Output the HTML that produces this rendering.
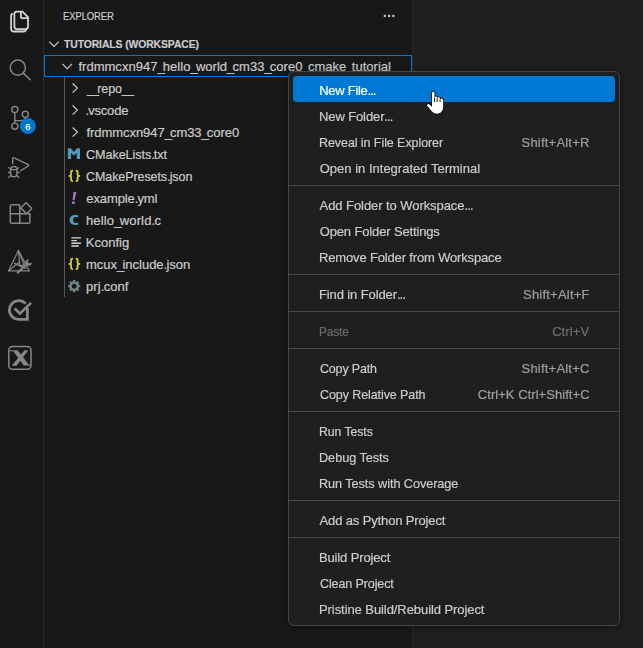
<!DOCTYPE html>
<html>
<head>
<meta charset="utf-8">
<title>Explorer</title>
<style>
*{box-sizing:border-box;margin:0;padding:0}
html,body{width:643px;height:648px;overflow:hidden;background:#1f1f1f}
body{position:relative;font-family:"Liberation Sans",sans-serif;font-size:13px;color:#cccccc}
#act{position:absolute;left:0;top:0;width:44px;height:648px;background:#181818;border-right:1px solid #2b2b2b}
#side{position:absolute;left:44px;top:0;width:369px;height:648px;background:#181818;border-right:1px solid #2b2b2b}
.t{-webkit-text-stroke:.2px;transform-origin:0 50%;position:absolute;white-space:nowrap;line-height:22px;height:22px;color:#cccccc;padding-top:1px}
.title{font-size:11px;padding-top:0}
.hdr{font-size:11px;font-weight:bold;padding-top:0}
#focus{position:absolute;left:44px;top:55px;width:368px;height:22px;border:1px solid #0078d4}
#guide{position:absolute;left:64px;top:77px;width:1px;height:220px;background:#585858}
#menu{position:absolute;left:288px;top:71px;width:332px;height:555px;background:#1f1f1f;border:1px solid #454545;border-radius:6px;box-shadow:0 2px 8px rgba(0,0,0,0.36)}
#sel{position:absolute;left:293px;top:76px;width:322px;height:26px;background:#0078d4;border-radius:4px}
.mi{will-change:opacity;-webkit-text-stroke:.2px;transform-origin:0 50%;position:absolute;white-space:nowrap;line-height:26px;height:26px;color:#cccccc;padding-top:2px}
.kb{color:#cccccc;opacity:.73}
.sel{color:#ffffff}
.dis{color:#6a6a6a}
.kb.dis{color:#8c8c8c}
.sep{position:absolute;left:289px;width:330px;height:1px;background:#454545}
#ov{position:absolute;left:0;top:0;width:643px;height:648px;overflow:visible}
</style>
</head>
<body>
<div id="act"></div>
<div id="side"></div>
<div id="focus"></div>
<div id="guide"></div>
<div class="t" style="left:78.41px;top:55px;letter-spacing:0.024px">frdmmcxn947<span style="letter-spacing:-1.806px">_</span>hello<span style="letter-spacing:-1.806px">_</span>world<span style="letter-spacing:-1.806px">_</span>cm33<span style="letter-spacing:-1.806px">_</span>core0<span style="letter-spacing:-1.806px">_</span>cmake<span style="letter-spacing:-1.806px">_</span>tutorial</div>
<div class="t" style="left:86.50px;top:77px;letter-spacing:-0.066px;transform:scaleX(0.96)"><span style="letter-spacing:-1.896px">__</span>repo<span style="letter-spacing:-1.896px">__</span></div>
<div class="t" style="left:85.59px;top:99px;letter-spacing:-0.195px"><span style="letter-spacing:-0.995px">.</span>vscode</div>
<div class="t" style="left:86.54px;top:121px;letter-spacing:-0.061px">frdmmcxn947<span style="letter-spacing:-1.891px">_</span>cm33<span style="letter-spacing:-1.891px">_</span>core0</div>
<div class="t" style="left:86.41px;top:143px;letter-spacing:-0.075px;transform:scaleX(0.97)">CMakeLists<span style="letter-spacing:-0.875px">.</span>txt</div>
<div class="t" style="left:86.41px;top:165px;letter-spacing:-0.071px;transform:scaleX(0.96)">CMakePresets<span style="letter-spacing:-0.871px">.</span>json</div>
<div class="t" style="left:86.29px;top:187px;letter-spacing:-0.100px">example<span style="letter-spacing:-0.900px">.</span>yml</div>
<div class="t" style="left:86.00px;top:209px;letter-spacing:0.144px">hello<span style="letter-spacing:-1.686px">_</span>world<span style="letter-spacing:-0.656px">.</span>c</div>
<div class="t" style="left:85.78px;top:231px;letter-spacing:0.017px">Kconfig</div>
<div class="t" style="left:86.03px;top:253px;letter-spacing:-0.009px">mcux<span style="letter-spacing:-1.839px">_</span>include<span style="letter-spacing:-0.809px">.</span>json</div>
<div class="t" style="left:86.06px;top:275px;letter-spacing:0.078px">prj<span style="letter-spacing:-0.722px">.</span>conf</div>
<div class="t title" style="left:63.44px;top:5px;letter-spacing:-0.099px;transform:scaleX(0.86)">EXPLORER</div>
<div class="t hdr" style="left:64.39px;top:33px;letter-spacing:-0.072px;transform:scaleX(0.94)">TUTORIALS (WORKSPACE)</div>
<div id="menu"></div>
<div id="sel"></div>
<div class="sep" style="top:185px"></div>
<div class="sep" style="top:274px"></div>
<div class="sep" style="top:311px"></div>
<div class="sep" style="top:348px"></div>
<div class="sep" style="top:411px"></div>
<div class="sep" style="top:500px"></div>
<div class="sep" style="top:537px"></div>
<div class="mi sel" style="left:319.16px;top:76px;letter-spacing:-0.268px">New File<span style="letter-spacing:-1.068px">...</span></div>
<div class="mi" style="left:319.01px;top:102px;letter-spacing:-0.112px">New Folder<span style="letter-spacing:-0.912px">...</span></div>
<div class="mi" style="left:319.18px;top:128px;letter-spacing:-0.066px;transform:scaleX(0.96)">Reveal in File Explorer</div>
<div class="mi" style="left:319.73px;top:154px;letter-spacing:0.006px">Open in Integrated Terminal</div>
<div class="mi" style="left:319.58px;top:191px;letter-spacing:-0.070px">Add Folder to Workspace<span style="letter-spacing:-0.870px">...</span></div>
<div class="mi" style="left:319.73px;top:217px;letter-spacing:-0.142px">Open Folder Settings</div>
<div class="mi" style="left:319.01px;top:243px;letter-spacing:-0.156px">Remove Folder from Workspace</div>
<div class="mi" style="left:319.01px;top:280px;letter-spacing:-0.114px">Find in Folder<span style="letter-spacing:-0.914px">...</span></div>
<div class="mi dis" style="left:318.85px;top:317px;letter-spacing:-0.059px;transform:scaleX(0.9)">Paste</div>
<div class="mi" style="left:319.80px;top:354px;letter-spacing:-0.172px;transform:scaleX(0.96)">Copy Path</div>
<div class="mi" style="left:319.80px;top:380px;letter-spacing:-0.079px;transform:scaleX(0.96)">Copy Relative Path</div>
<div class="mi" style="left:318.51px;top:417px;letter-spacing:-0.049px;transform:scaleX(0.94)">Run Tests</div>
<div class="mi" style="left:319.07px;top:443px;letter-spacing:-0.036px;transform:scaleX(0.975)">Debug Tests</div>
<div class="mi" style="left:319.07px;top:469px;letter-spacing:-0.060px;transform:scaleX(0.975)">Run Tests with Coverage</div>
<div class="mi" style="left:319.58px;top:506px;letter-spacing:-0.139px">Add as Python Project</div>
<div class="mi" style="left:319.01px;top:543px;letter-spacing:-0.143px">Build Project</div>
<div class="mi" style="left:319.80px;top:569px;letter-spacing:-0.128px;transform:scaleX(0.965)">Clean Project</div>
<div class="mi" style="left:319.01px;top:595px;letter-spacing:-0.075px">Pristine Build/Rebuild Project</div>
<div class="mi kb" style="left:521.55px;top:128px;letter-spacing:0.205px">Shift+Alt+R</div>
<div class="mi kb" style="left:523.00px;top:280px;letter-spacing:0.214px">Shift+Alt+F</div>
<div class="mi kb dis" style="left:552.14px;top:317px;letter-spacing:0.093px">Ctrl+V</div>
<div class="mi kb" style="left:521.55px;top:354px;letter-spacing:0.205px">Shift+Alt+C</div>
<div class="mi kb" style="left:477.80px;top:380px;letter-spacing:0.047px">Ctrl+K Ctrl+Shift+C</div>
<svg id="ov" width="643" height="648" viewBox="0 0 643 648">
<!-- activity bar: files (active) -->
<g fill="none" stroke="#d7d7d7" stroke-width="1.75" stroke-linejoin="round" stroke-linecap="round">
<path d="M16.8 11.6 H22.4 L28 17.2 V26.6 Q28 29 25.6 29 H16.8 Q14.4 29 14.4 26.6 V14 Q14.4 11.6 16.8 11.6 Z"/>
<path d="M20.9 11.8 V16.4 Q20.9 18.2 22.7 18.2 H27.8"/>
<path d="M12.2 13.9 Q11.1 14.4 11.1 16 V28.8 Q11.1 31.6 13.9 31.6 H23.4 Q25.4 31.6 26.2 29.8"/>
<path d="M14.6 30.3 H25" stroke="#9a9a9a" stroke-width="1"/>
</g>
<!-- search -->
<g fill="none" stroke="#868686" stroke-width="1.5" stroke-linecap="round">
<circle cx="17.8" cy="67.6" r="7.6"/>
<path d="M23.4 73.4 L30.2 79.8"/>
</g>
<!-- source control -->
<g fill="none" stroke="#868686" stroke-width="1.4" stroke-linecap="round">
<circle cx="14.8" cy="109.6" r="3.05"/>
<circle cx="14.8" cy="126.2" r="3.05"/>
<circle cx="25.3" cy="114.3" r="3.05"/>
<path d="M14.8 112.7 V123.1"/>
<path d="M25.3 117.4 Q25.3 120.6 21.8 120.6 H14.8"/>
</g>
<circle cx="27.9" cy="126.1" r="8" fill="#0078d4"/>
<text x="28" y="129.7" font-family="Liberation Sans, sans-serif" font-size="9.8" fill="#ffffff" stroke="#ffffff" stroke-width=".25" text-anchor="middle">6</text>
<!-- run and debug -->
<g fill="none" stroke="#868686" stroke-width="1.4" stroke-linecap="round" stroke-linejoin="round">
<path d="M12.7 163.6 V158.8 Q12.7 157.2 14.2 157.9 L28.2 164.7 Q29.3 165.3 28.2 166 L20.8 170.6"/>
<path d="M10.6 170.4 Q10.6 166.5 13.8 166.5 Q17 166.5 17 170.4 V173 Q17 176.8 13.8 176.8 Q10.6 176.8 10.6 173 Z"/>
<path d="M10.8 169.7 H16.8" stroke-width="1.3"/>
<path d="M10.4 172.5 H8.3 M17.2 172.5 H19.3 M10.8 169.2 L8.8 167.6 M16.8 169.2 L18.8 167.6 M11 175.4 L8.8 177.3 M16.6 175.4 L18.8 177.3" stroke-width="1.3"/>
</g>
<!-- extensions -->
<g fill="none" stroke="#868686" stroke-width="1.5" stroke-linejoin="round">
<path d="M19.8 204.8 H11.6 Q10.3 204.8 10.3 206.1 V222 Q10.3 223.3 11.6 223.3 H28.6 Q29.9 223.3 29.9 222 V213.8 H10.3 M19.8 204.8 V223.3"/>
<path d="M26.1 202.7 L31.4 208 Q31.9 208.5 31.4 209 L26.6 213.8 L20.9 208.1 L25.7 203.1 Q26.1 202.7 26.5 203.1 Z"/>
</g>
<!-- cmake tools -->
<g fill="none" stroke="#868686" stroke-width="1.2" stroke-linejoin="round" stroke-linecap="round">
<path d="M18.4 250.4 L8.5 270.9 H29.2 Z"/>
<path d="M18.4 250.4 L19.9 266.4 M8.5 270.9 L19.2 262.2 M14.4 263.4 L25.6 268.4 M18.4 250.4 L24 264.6 L19.9 266.4"/>
</g>
<g fill="none" stroke="#868686" stroke-linecap="round">
<path d="M17.7 272.7 L26 264.8" stroke-width="2"/>
</g>
<path d="M26.2 260.2 L29 259 L27.6 262 L29.6 263.6 L32 262.4 Q31.6 265.6 28.6 265.8 Q25.4 265.6 25.2 262.8 Q25.2 261.2 26.2 260.2 Z" fill="#868686"/>
<!-- testing-like check -->
<g fill="none" stroke="#868686" stroke-width="2.8" stroke-linejoin="miter">
<path d="M25.6 303.6 A9.35 9.35 0 1 0 18.7 319.35 H27.4 V307.8"/>
<path d="M14.7 308.4 L19.8 313.7 L31 302.9" stroke-width="2.7"/>
</g>
<!-- mcuxpresso X -->
<rect x="8.8" y="346.6" width="22.2" height="22.6" rx="3.6" fill="none" stroke="#868686" stroke-width="1.5"/>
<g fill="#868686">
<path d="M12.6 350.2 H17.7 L29.4 365.6 H23.7 Z"/>
<path d="M24.4 350.2 H28.3 L16.6 365.7 H11.7 Z"/>
<rect x="9.5" y="350.2" width="3.4" height="1.1"/>
<rect x="28.6" y="364.5" width="1.9" height="1.1"/>
</g>

<!-- explorer "..." -->
<g fill="#cccccc"><rect x="383.7" y="14.8" width="2.2" height="2.2" rx=".6"/><rect x="388" y="14.8" width="2.2" height="2.2" rx=".6"/><rect x="392.3" y="14.8" width="2.2" height="2.2" rx=".6"/></g>

<!-- chevrons -->
<g fill="none" stroke="#cccccc" stroke-width="1.15" stroke-linejoin="miter">
<path d="M49.2 41.6 L54 46.5 L58.8 41.6"/>
<path d="M62.4 63.8 L67.2 68.6 L72 63.8"/>
<path d="M72.6 83.5 L77.4 88.1 L72.6 92.7"/>
<path d="M72.6 105.5 L77.4 110.1 L72.6 114.7"/>
<path d="M72.6 127.5 L77.4 132.1 L72.6 136.7"/>
</g>

<!-- file icons -->
<path d="M67.8 159 V148.2 H70.8 L73.9 151.9 L77 148.2 H80 V159 H76.7 V153 L73.9 155.4 L71.1 153 V159 Z" fill="#519aba"/>
<g fill="none" stroke="#cbcb41" stroke-width="1.85" stroke-linecap="butt" stroke-linejoin="round">
<path d="M73 170.7 H72.4 Q71.1 170.7 71.1 172.0 V174.3 Q71.1 175.9 69.4 175.9 Q71.1 175.9 71.1 177.5 V179.8 Q71.1 181.1 72.4 181.1 H73"/>
<path d="M75.7 170.7 H76.3 Q77.6 170.7 77.6 172.0 V174.3 Q77.6 175.9 79.3 175.9 Q77.6 175.9 77.6 177.5 V179.8 Q77.6 181.1 76.3 181.1 H75.7"/>
<path d="M73 258.7 H72.4 Q71.1 258.7 71.1 260.0 V262.3 Q71.1 263.9 69.4 263.9 Q71.1 263.9 71.1 265.5 V267.8 Q71.1 269.1 72.4 269.1 H73"/>
<path d="M75.7 258.7 H76.3 Q77.6 258.7 77.6 260.0 V262.3 Q77.6 263.9 79.3 263.9 Q77.6 263.9 77.6 265.5 V267.8 Q77.6 269.1 76.3 269.1 H75.7"/>
</g>
<g fill="#a074c4">
<path d="M73.5 192 H76.4 L74.6 200.1 H72.5 Z"/>
<ellipse cx="73.4" cy="202.7" rx="1.7" ry="1.4"/>
</g>
<path d="M78.2 215.5 C77.3 215.15 76.3 215 75.3 215 C71.8 215 69.6 216.9 69.6 219.95 C69.6 223 71.8 224.9 75.3 224.9 C76.3 224.9 77.3 224.75 78.2 224.4 L78.2 222.4 C77.4 222.75 76.6 222.9 75.8 222.9 C74 222.9 73.1 221.8 73.1 219.95 C73.1 218.1 74 217 75.8 217 C76.6 217 77.4 217.15 78.2 217.5 Z" fill="#519aba"/>
<g stroke="#d4d7d6" stroke-width="1.4">
<path d="M71.4 237.9 H81 M71.4 240.6 H76.9 M71.4 243.3 H81 M71.4 246 H78.9"/>
</g>
<!-- gear -->
<g transform="translate(74.2 286.2)">
<circle r="3.7" fill="none" stroke="#6d8086" stroke-width="2.6"/>
<g stroke="#6d8086" stroke-width="2.3">
<path d="M0 -4.4 V-6.1 M0 4.4 V6.1 M-4.4 0 H-6.1 M4.4 0 H6.1"/>
<path d="M3.1 -3.1 L4.3 -4.3 M-3.1 -3.1 L-4.3 -4.3 M3.1 3.1 L4.3 4.3 M-3.1 3.1 L-4.3 4.3"/>
</g>
</g>

<!-- mouse cursor (hand) -->
<g>
<path d="M432 93.2 Q432 91.5 433.2 91.5 Q434.5 91.5 434.5 93.2 V97.6 Q434.6 96.4 435.8 96.4 Q437.1 96.4 437.1 97.8 V98.4 Q437.3 97.3 438.6 97.3 Q440 97.3 440 98.7 V99.4 Q440.3 98.4 441.6 98.4 Q443.2 98.4 443.2 100.2 V107 Q443.2 110.8 440.8 112.5 Q438.2 114.1 435.4 113.5 Q433.4 113 431.8 111.2 L427.4 106 Q426.5 104.7 427.6 104.2 Q428.8 103.8 430 104.9 L432 106.8 Z" fill="#ffffff" stroke="#101010" stroke-width="1.8" stroke-linejoin="round" paint-order="stroke"/>
<path d="M434.6 97.4 V102 M437.2 98.2 V102 M440.1 99.2 V102" stroke="#1a1a1a" stroke-width="1" fill="none"/>
</g>
</svg>
</body>
</html>
